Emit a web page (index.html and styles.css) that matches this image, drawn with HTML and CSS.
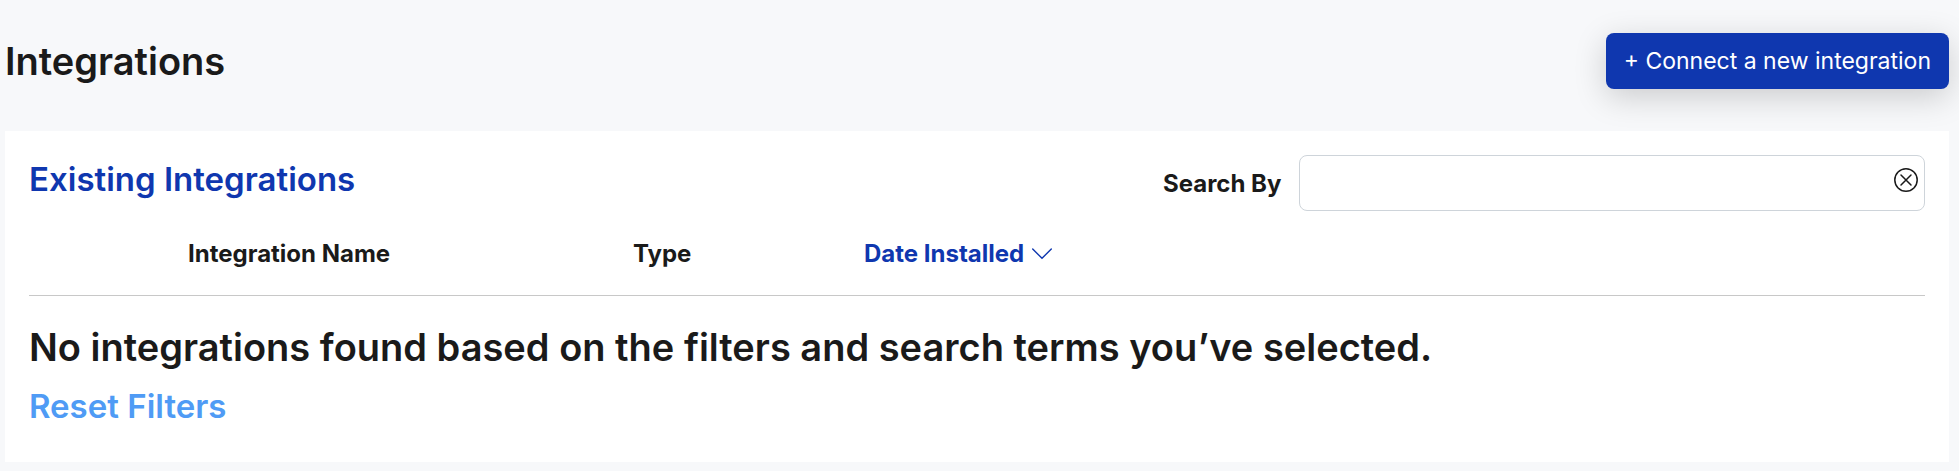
FILE: index.html
```
<!DOCTYPE html>
<html lang="en">
<head>
<meta charset="utf-8">
<title>Integrations</title>
<link rel="stylesheet" href="styles.css">
</head>
<body>
<main class="page">
  <header class="page-header">
    <h1 class="page-title">Integrations</h1>
    <button class="connect" type="button">+ Connect a new integration</button>
  </header>
  <section class="panel">
    <div class="panel-header">
      <h2 class="panel-title">Existing Integrations</h2>
      <form class="search">
        <label class="search-label" for="search">Search By</label>
        <div class="search-field">
          <input class="search-input" id="search" type="text">
          <button class="clear" type="reset" aria-label="Clear search">
            <svg class="clear-icon" viewBox="0 0 24 24"><circle cx="12" cy="12" r="11.2"/><path d="M7 7l10 10M17 7L7 17"/></svg>
          </button>
        </div>
      </form>
    </div>
    <table class="table">
      <thead>
        <tr>
          <th class="col-icon"></th>
          <th class="col-name">Integration Name</th>
          <th class="col-type">Type</th>
          <th class="col-date"><button class="sort" type="button">Date Installed<svg class="sort-icon" viewBox="0 0 20 12"><path d="M.7 1l9.3 9.3L19.3 1"/></svg></button></th>
        </tr>
      </thead>
    </table>
    <p class="empty">No integrations found based on the filters and search terms you’ve selected.</p>
    <a class="reset" href="#">Reset Filters</a>
  </section>
</main>
</body>
</html>
```
FILE: styles.css
```
* { box-sizing: border-box; }
body {
  margin: 0;
  background: #f7f8fa;
  color: #1a1a1a;
  font-family: Inter, "Liberation Sans", sans-serif;
  font-size: 24px;
}
h1, h2, p { margin: 0; font-weight: 600; }
button { font: inherit; cursor: pointer; }
.page { padding: 33px 10px 8px 5px; }
.page-header {
  display: flex;
  justify-content: space-between;
  align-items: center;
  margin-bottom: 42px;
}
.page-title { font-size: 38px; line-height: 56px; }
.connect {
  height: 56px;
  padding: 0 18px;
  border: 0;
  border-radius: 8px;
  background: #0f37af;
  color: #fff;
  font-size: 23px;
  box-shadow: 0 8px 32px rgba(0, 0, 0, .18);
}
.panel { position: relative; padding: 24px 24px 32px; background: #fff; }
.panel-header { display: flex; justify-content: space-between; }
.panel-title { color: #0f37af; font-size: 33px; line-height: 48px; }
.search { display: flex; align-items: center; gap: 18px; width: 762px; }
.search-label { font-weight: 700; white-space: nowrap; }
.search-field { position: relative; flex: 1; }
.search-input {
  display: block;
  width: 100%;
  height: 56px;
  padding: 0 48px 0 16px;
  border: 1px solid #ced4da;
  border-radius: 8px;
  font: inherit;
}
.clear {
  position: absolute;
  top: 13px;
  right: 7px;
  width: 24px;
  height: 24px;
  padding: 0;
  border: 0;
  background: none;
}
.clear-icon { display: block; width: 24px; fill: none; stroke: #1a1a1a; stroke-width: 1.5; stroke-linecap: round; }
.table {
  width: 100%;
  border-collapse: collapse;
  table-layout: fixed;
  border-bottom: 1px solid #c8c8c8;
}
.table th { height: 84px; padding: 2px 0 0; text-align: left; font-weight: 700; }
.col-icon { width: 159px; }
.col-name { width: 445px; }
.col-type { width: 231px; }
.sort {
  display: flex;
  align-items: center;
  gap: 8px;
  padding: 0;
  border: 0;
  background: none;
  color: #0f37af;
}
.sort-icon { width: 20px; fill: none; stroke: #0f37af; stroke-width: 1.4; stroke-linecap: round; }
.empty { margin-top: 24px; font-size: 38px; line-height: 54px; }
.reset {
  display: inline-block;
  margin-top: 8px;
  color: #4f9bf5;
  font-size: 33px;
  font-weight: 600;
  line-height: 48px;
  text-decoration: none;
}
```
